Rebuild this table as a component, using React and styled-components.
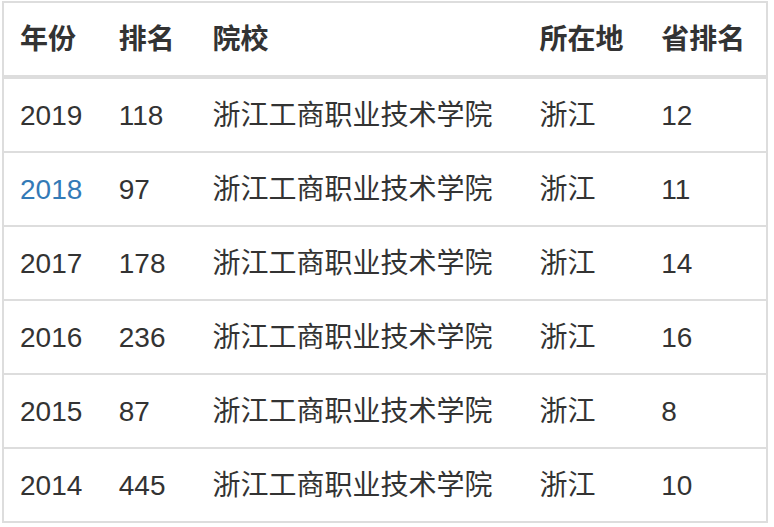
import React from "react";
import styled, { createGlobalStyle } from "styled-components";

const GlobalStyle = createGlobalStyle`
  html, body {
    margin: 0;
    padding: 0;
    background: #fff;
  }
  body {
    font-family: "Liberation Sans", "Noto Sans CJK SC", sans-serif;
    color: #333;
  }
`;

const Wrapper = styled.div`
  padding: 1px 6px 0 2px;
`;

const Table = styled.table`
  width: 766px;
  border-collapse: collapse;
  border-spacing: 0;
  border: 2px solid #ddd;
  font-size: 28px;
  line-height: 40px;
`;

const Th = styled.th`
  text-align: left;
  font-weight: bold;
  padding: 17px 16px 15px;
  border-bottom: 4px solid #ddd;
  white-space: nowrap;
`;

const Td = styled.td`
  padding: 17px 16px 15px;
  border-top: 2px solid #ddd;
  white-space: nowrap;
`;

const Link = styled.a`
  color: #337ab7;
  text-decoration: none;
`;

const cols = [100, 94, 328, 122, 122];

const rows = [
  { year: "2019", rank: "118", school: "浙江工商职业技术学院", place: "浙江", prov: "12" },
  { year: "2018", rank: "97", school: "浙江工商职业技术学院", place: "浙江", prov: "11", link: true },
  { year: "2017", rank: "178", school: "浙江工商职业技术学院", place: "浙江", prov: "14" },
  { year: "2016", rank: "236", school: "浙江工商职业技术学院", place: "浙江", prov: "16" },
  { year: "2015", rank: "87", school: "浙江工商职业技术学院", place: "浙江", prov: "8" },
  { year: "2014", rank: "445", school: "浙江工商职业技术学院", place: "浙江", prov: "10" },
];

export default function App() {
  return (
    <Wrapper>
      <GlobalStyle />
      <Table>
        <colgroup>
          {cols.map((w, i) => (
            <col key={i} style={{ width: w }} />
          ))}
        </colgroup>
        <thead>
          <tr>
            <Th>年份</Th>
            <Th>排名</Th>
            <Th>院校</Th>
            <Th>所在地</Th>
            <Th>省排名</Th>
          </tr>
        </thead>
        <tbody>
          {rows.map((r) => (
            <tr key={r.year}>
              <Td>{r.link ? <Link href="#">{r.year}</Link> : r.year}</Td>
              <Td>{r.rank}</Td>
              <Td>{r.school}</Td>
              <Td>{r.place}</Td>
              <Td>{r.prov}</Td>
            </tr>
          ))}
        </tbody>
      </Table>
    </Wrapper>
  );
}
